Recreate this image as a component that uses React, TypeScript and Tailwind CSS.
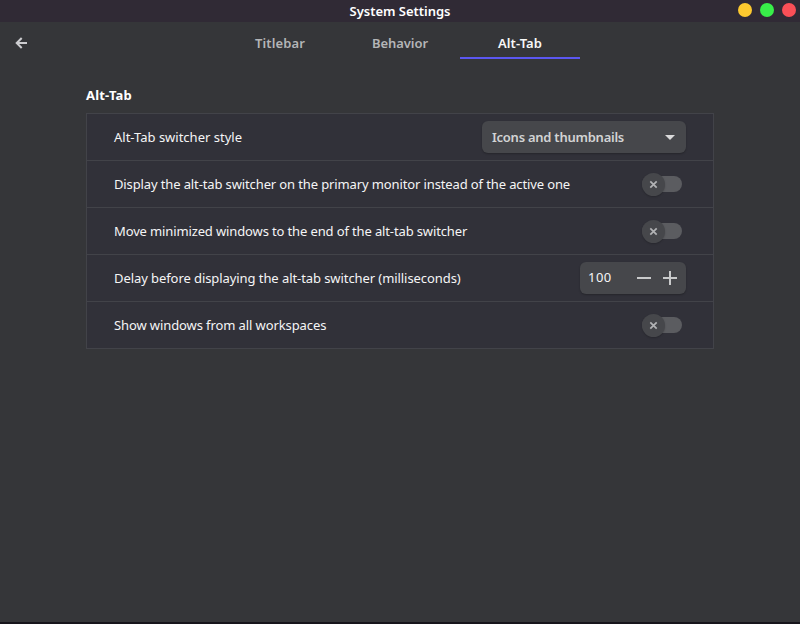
import type { ReactNode } from "react";

function Row({ label, tracking, children }: { label: string; tracking: string; children: ReactNode }) {
  return (
    <div className="flex h-[47px] items-center justify-between border-b border-[#424349] pr-[27px] pl-[27px]">
      <span className={`text-[13px] leading-[18px] whitespace-nowrap text-[#f5f5f6] ${tracking}`}>{label}</span>
      {children}
    </div>
  );
}

function Toggle() {
  return (
    <button aria-label="Toggle" className="mr-[3px] flex h-6 w-[41px] items-center">
      <span className="flex h-4 w-10 items-center rounded-full bg-[#5b5c60]">
        <span className="flex size-[23px] shrink-0 items-center justify-center rounded-full bg-[#46474b] shadow-[0_1px_2px_rgba(0,0,0,0.2)]">
          <svg width="9" height="9" viewBox="0 0 9 9" fill="none" stroke="#b2b3b5" strokeWidth="1.7">
            <path d="M1.3 1.3 7.7 7.7M7.7 1.3 1.3 7.7" />
          </svg>
        </span>
      </span>
    </button>
  );
}

function Tab({ label, active, tracking }: { label: string; active?: boolean; tracking: string }) {
  return (
    <button
      className={`h-[37px] w-[120px] border-b-2 pt-[7px] text-[13px] leading-[18px] font-semibold ${tracking} ${
        active ? "border-[#5b57f0] text-[#f8f8f8]" : "border-transparent text-[#b4b5b7]"
      }`}
    >
      {label}
    </button>
  );
}

export default function App() {
  return (
    <div className="flex h-[624px] w-[800px] flex-col overflow-hidden border-b-2 border-[#17151c] bg-[#353639] font-['Noto_Sans',sans-serif]">
      <header className="grid h-[22px] shrink-0 grid-cols-[100px_1fr_100px] items-center bg-[#302a35]">
        <span />
        <h1 className="text-center text-[13px] leading-[18px] font-semibold tracking-[-0.03px] text-white">System Settings</h1>
        <div className="flex justify-end gap-2 pr-[4px] pb-[2px]">
          <span className="size-[14px] rounded-full bg-[#fdc92f]" />
          <span className="size-[14px] rounded-full bg-[#38ee49]" />
          <span className="size-[14px] rounded-full bg-[#fa4f57]" />
        </div>
      </header>
      <nav className="grid h-[37px] shrink-0 grid-cols-[220px_1fr_220px] items-start">
        <button aria-label="Back" className="pt-[15px] pl-[15px]">
          <svg width="12" height="12" viewBox="0 0 12 12" fill="none" stroke="#cdcdd0" strokeWidth="2">
            <path d="M12 6H1.5M6.7 1 1.7 6l5 5" />
          </svg>
        </button>
        <div className="flex">
          <Tab label="Titlebar" tracking="tracking-[0.1px]" />
          <Tab label="Behavior" tracking="tracking-[-0.05px]" />
          <Tab label="Alt-Tab" tracking="tracking-[0.1px]" active />
        </div>
      </nav>
      <main className="px-[86px] pt-[27px]">
        <h2 className="mb-[9px] text-[13px] leading-[18px] font-bold tracking-[0.2px] text-white">Alt-Tab</h2>
        <section className="border border-b-0 border-[#424349] bg-[#313139]">
          <Row label="Alt-Tab switcher style" tracking="tracking-[0px]">
            <button className="flex h-8 w-[204px] items-center justify-between rounded-md bg-[#46474b] pr-[11px] pl-[10px] shadow-[0_1px_2px_rgba(0,0,0,0.25)]">
              <span className="text-[13px] leading-[18px] font-semibold tracking-[-0.25px] text-[#d2d3d4]">Icons and thumbnails</span>
              <svg width="10" height="5" viewBox="0 0 10 5" fill="#dadadb">
                <path d="M0 0h10L5 5z" />
              </svg>
            </button>
          </Row>
          <Row label="Display the alt-tab switcher on the primary monitor instead of the active one" tracking="tracking-[-0.122px]">
            <Toggle />
          </Row>
          <Row label="Move minimized windows to the end of the alt-tab switcher" tracking="tracking-[-0.13px]">
            <Toggle />
          </Row>
          <Row label="Delay before displaying the alt-tab switcher (milliseconds)" tracking="tracking-[-0.075px]">
            <div className="flex h-8 w-[106px] items-center rounded-md bg-[#46474b] pr-[9px] pl-2 shadow-[0_1px_2px_rgba(0,0,0,0.25)]">
              <span className="flex-1 pb-[2px] text-[13px] leading-[18px] tracking-[0.5px] text-[#f5f5f6]">100</span>
              <svg width="14" height="14" viewBox="0 0 14 14" fill="#c9cacb" className="mr-3">
                <path d="M0 6h14v2H0z" />
              </svg>
              <svg width="14" height="14" viewBox="0 0 14 14" fill="#c9cacb">
                <path d="M0 6h14v2H0zM6 0h2v14H6z" />
              </svg>
            </div>
          </Row>
          <Row label="Show windows from all workspaces" tracking="tracking-[-0.1px]">
            <Toggle />
          </Row>
        </section>
      </main>
    </div>
  );
}
